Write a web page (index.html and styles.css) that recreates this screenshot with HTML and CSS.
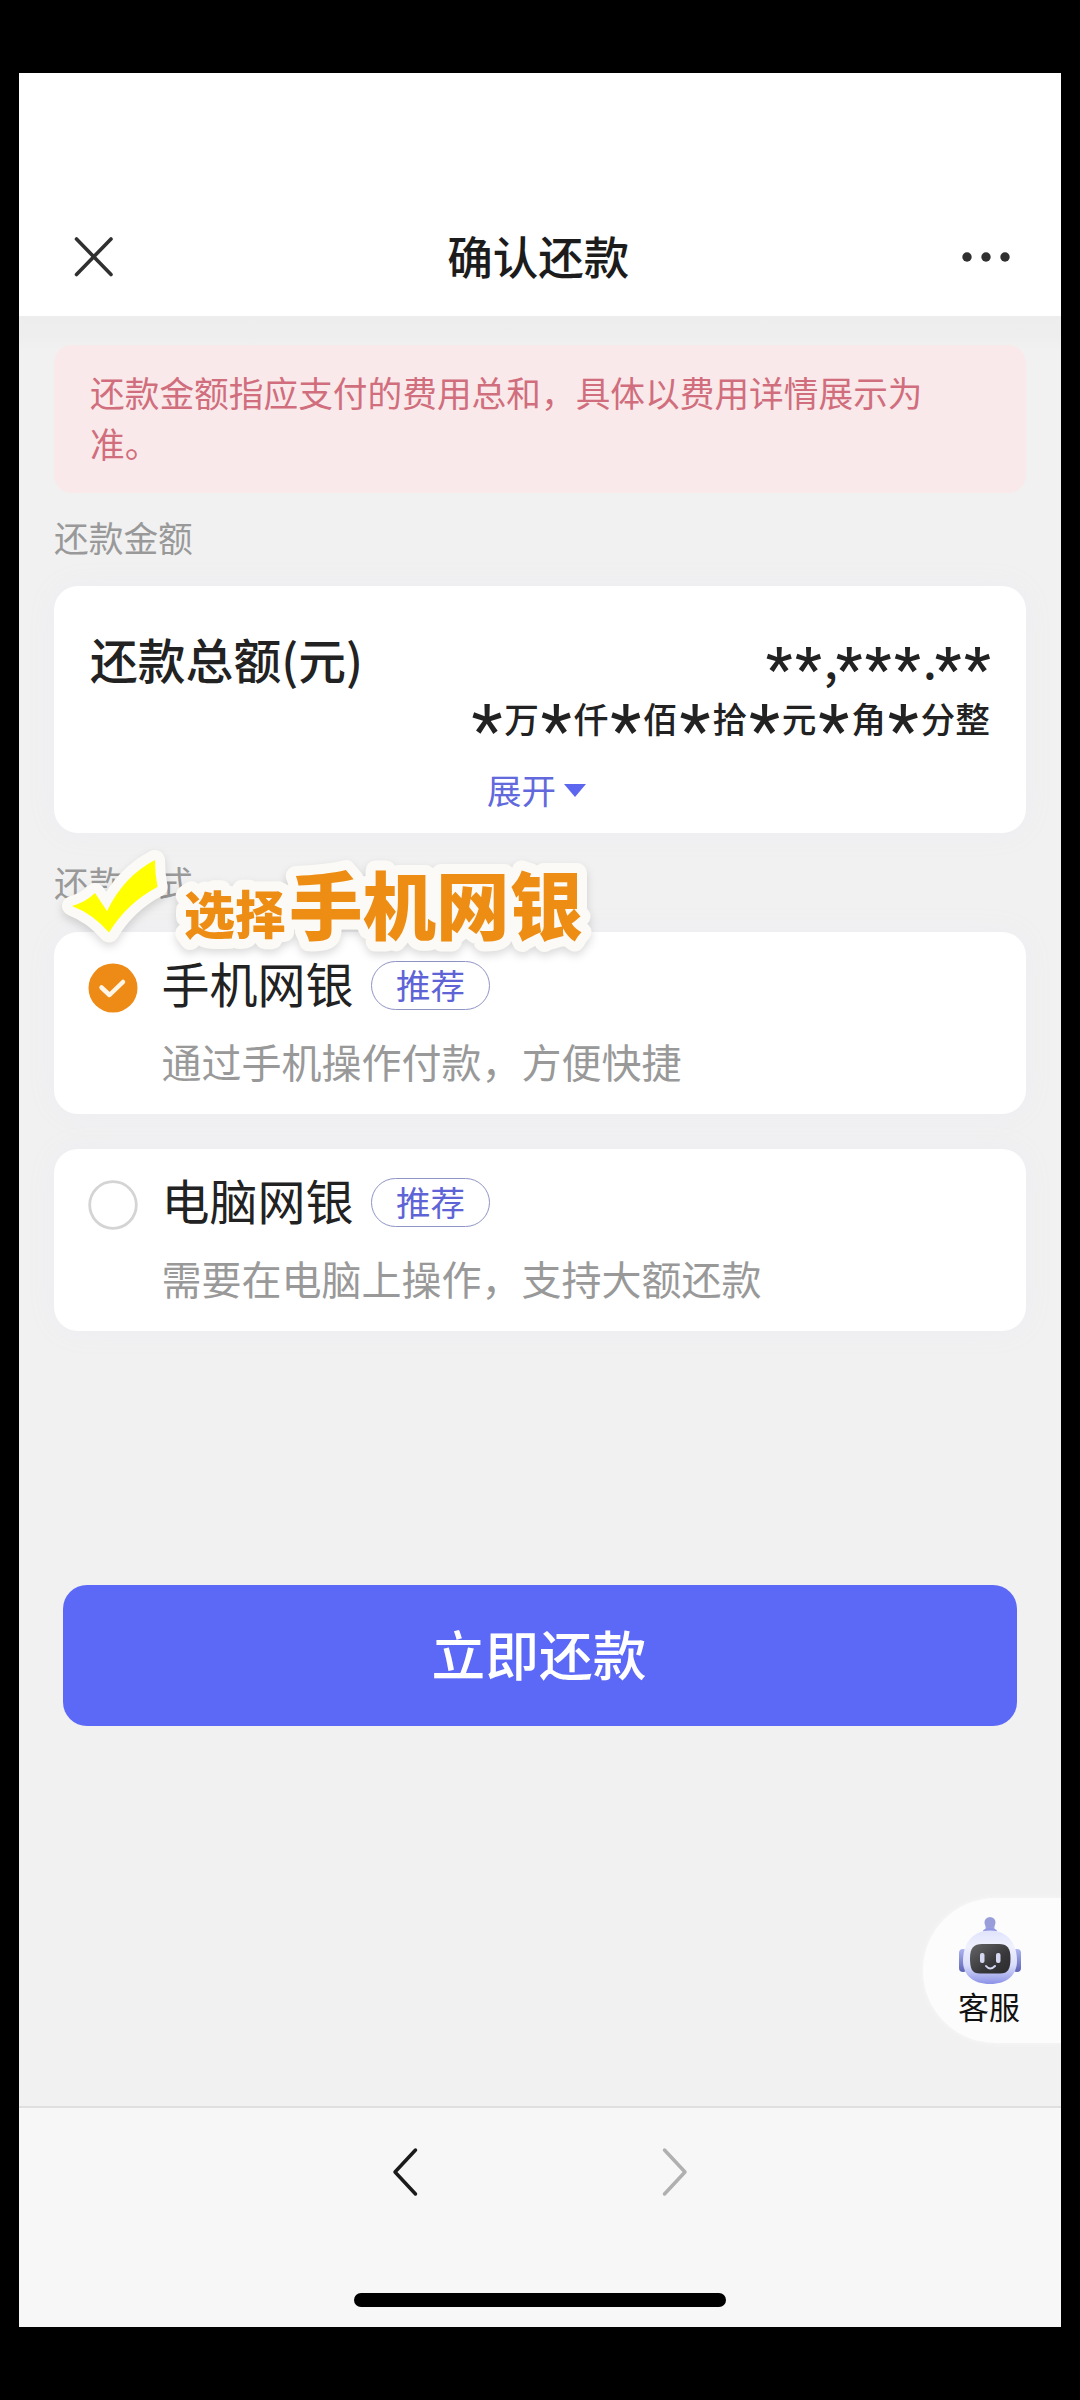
FILE: index.html
```html
<!DOCTYPE html>
<html lang="zh-CN">
<head>
<meta charset="utf-8">
<title>确认还款</title>
<link rel="stylesheet" href="styles.css">
</head>
<body>
<div class="screen">
  <header class="header">
    <svg class="close" viewBox="0 0 40 42"><path d="M2.500 3L37 38.500M37 3L2.500 38.500"/></svg>
    <h1 class="title">确认还款</h1>
    <svg class="more" viewBox="0 0 48 10"><circle cx="5" cy="5" r="4.700"/><circle cx="24" cy="5" r="4.700"/><circle cx="43" cy="5" r="4.700"/></svg>
  </header>
  <main class="content">
    <div class="notice">还款金额指应支付的费用总和，具体以费用详情展示为准。</div>
    <div class="label">还款金额</div>
    <section class="card total">
      <div class="total-row"><span class="total-name">还款总额(元)</span><span class="total-value"><b>**</b>,<b>***</b>.<b>**</b></span></div>
      <div class="total-words"><i>*</i>万<i>*</i>仟<i>*</i>佰<i>*</i>拾<i>*</i>元<i>*</i>角<i>*</i>分整</div>
      <div class="expand">展开<span class="caret"></span></div>
    </section>
    <div class="label label-method">还款方式
      <svg class="sticker" viewBox="54 833 560 130">
        <path d="M72 906Q86 902 95 893L107 911Q124 876 155 860Q155 874 157.500 887Q127 903 109 932.500Q93 914 72 906Z"/>
        <text y="934"><tspan class="sticker-small" x="184">选择</tspan><tspan x="289">手机网银</tspan></text>
      </svg>
    </div>
    <section class="card option">
      <svg class="radio" viewBox="0 0 50 50"><circle class="radio-on" cx="25" cy="25" r="24.500"/><path class="radio-tick" d="M13.500 24.500L21.500 32L35 19"/></svg>
      <div class="option-body">
        <div class="option-title">手机网银<span class="tag">推荐</span></div>
        <div class="option-desc">通过手机操作付款，方便快捷</div>
      </div>
    </section>
    <section class="card option">
      <svg class="radio" viewBox="0 0 50 50"><circle class="radio-off" cx="25" cy="25" r="23.300"/></svg>
      <div class="option-body">
        <div class="option-title">电脑网银<span class="tag">推荐</span></div>
        <div class="option-desc">需要在电脑上操作，支持大额还款</div>
      </div>
    </section>
    <button class="pay">立即还款</button>
    <div class="service">
      <svg class="robot" viewBox="0 0 66 70">
        <defs>
          <linearGradient id="head" x1="0" y1="0" x2="0" y2="1"><stop offset="0" stop-color="#e0e3fb"/><stop offset=".3" stop-color="#f0f1fe"/><stop offset=".65" stop-color="#dadefa"/><stop offset="1" stop-color="#8c92e6"/></linearGradient>
          <linearGradient id="ear" x1="0" y1="0" x2="0" y2="1"><stop offset="0" stop-color="#aeb4f1"/><stop offset="1" stop-color="#5d63b4"/></linearGradient>
          <linearGradient id="face" x1="0" y1="0" x2="1" y2="1"><stop offset="0" stop-color="#666668"/><stop offset=".6" stop-color="#38383a"/><stop offset="1" stop-color="#2c2c2e"/></linearGradient>
        </defs>
        <rect x="2" y="33" width="8" height="23" rx="4" fill="url(#ear)"/>
        <rect x="56" y="33" width="8" height="23" rx="4" fill="url(#ear)"/>
        <rect x="28.500" y="8" width="9" height="10" fill="#9fa5e3"/>
        <circle cx="33" cy="6.500" r="5.500" fill="#999edb"/>
        <ellipse cx="33" cy="15" rx="7" ry="3" fill="#9198df"/>
        <path d="M33 14.500C50 14.500 60 27 60 45C60 59 50 68 33 68S6 59 6 45C6 27 16 14.500 33 14.500Z" fill="url(#head)"/>
        <path d="M25 28H42C50 28 53.500 32 53.500 42C53.500 53 51 57.500 43 57.500H23C15 57.500 13 53 13 42C13 32 17 28 25 28Z" fill="url(#face)"/>
        <rect x="23" y="37" width="4.500" height="10" rx="2" fill="#d6d8f2"/>
        <rect x="39" y="37" width="4.500" height="10" rx="2" fill="#d6d8f2"/>
        <path d="M29 50Q33 55 38 50" fill="none" stroke="#d6d8f2" stroke-width="2" stroke-linecap="round"/>
      </svg>
      <span>客服</span>
    </div>
  </main>
  <footer class="footer">
    <nav class="nav">
      <svg class="chevron back" viewBox="0 0 28 50"><path d="M24.500 3L4 25L24.500 47"/></svg>
      <svg class="chevron forward" viewBox="0 0 28 50"><path d="M3.500 3L24 25L3.500 47"/></svg>
    </nav>
    <div class="home"></div>
  </footer>
</div>
</body>
</html>
```
FILE: styles.css
```css
* { box-sizing: border-box; }
body {
  margin: 0;
  height: 2400px;
  padding: 72.500px 19px 0 18.500px;
  background: #000;
  color: #222;
  font-family: "Noto Sans CJK SC", sans-serif;
  overflow: hidden;
}
.screen {
  display: flex;
  flex-direction: column;
  height: 2254.500px;
  background: #f0f0f1;
  overflow: hidden;
}
.header {
  flex: none;
  height: 243.500px;
  padding: 125px 50.500px 0 55.500px;
  display: flex;
  justify-content: space-between;
  align-items: flex-start;
  background: #fff;
}
.close { width: 40px; height: 42px; margin-top: 38px; }
.close path { fill: none; stroke: #303030; stroke-width: 3.600; stroke-linecap: round; }
.title {
  margin: 24px 0 0;
  font-size: 45.500px;
  line-height: 66px;
  font-weight: 500;
  color: #1c1c1c;
}
.more { width: 48px; height: 10px; margin-top: 54px; fill: #303030; }
.content {
  position: relative;
  flex: none;
  height: 1790px;
  padding: 29px 35.500px 0 35.500px;
  background: linear-gradient(#ededed 0, #eee 20px, #f1f1f1 34px);
}
.notice {
  height: 148px;
  padding: 22px 36px;
  border-radius: 18px;
  background: #fae9ea;
  color: #d06e7d;
  font-size: 34.700px;
  line-height: 51px;
}
.label {
  height: 93px;
  padding-top: 18px;
  font-size: 34.700px;
  line-height: 52px;
  color: #999;
}
.card { border-radius: 24px; background: #fff; box-shadow: 0 0 30px #ededf3; }
.total { height: 247px; padding: 40px 35.500px 0 36px; }
.total-row { display: flex; justify-content: space-between; height: 66px; line-height: 66px; font-weight: 500; }
.total-name { font-size: 47.800px; }
.total-value { font-size: 46px; letter-spacing: -2px; }
.total-value b {
  font-family: Roboto, sans-serif;
  font-size: 60px;
  font-weight: 500;
  letter-spacing: 2.500px;
  line-height: 0;
  vertical-align: -10px;
}
.total-value b:last-child { margin-right: -3px; }
.total-words { height: 52px; text-align: right; font-size: 34.700px; line-height: 52px; font-weight: 500; white-space: nowrap; }
.total-words i {
  display: inline-flex;
  justify-content: center;
  width: 34.700px;
  height: 0;
  font: 400 72px/0 Roboto, sans-serif;
  vertical-align: -23px;
}
.expand {
  display: flex;
  align-items: center;
  justify-content: center;
  gap: 8px;
  margin-top: 20px;
  padding-right: 7px;
  font-size: 34.500px;
  line-height: 50px;
  color: #6169dd;
}
.caret { margin-top: 3px; border: 11px solid transparent; border-top: 13px solid #5c66ef; border-bottom: 0; }
.label-method { position: relative; height: 99px; padding-top: 23px; z-index: 1; }
.sticker {
  position: absolute;
  left: 0;
  top: 0;
  width: 560px;
  height: 130px;
  overflow: visible;
  fill: #ed8d14;
  stroke: #fcfaf6;
  stroke-width: 20px;
  stroke-linejoin: round;
  font-size: 73.500px;
  font-weight: 900;
  filter: drop-shadow(0 4px 4px rgba(0, 0, 0, .14));
}
.sticker path, .sticker text { paint-order: stroke; }
.sticker path { fill: #ffff00; }
.sticker-small { font-size: 51px; }
.option { display: flex; height: 182px; padding: 0 35px 0 34px; margin-bottom: 35px; }
.radio { flex: none; width: 50px; height: 50px; margin-top: 31px; }
.radio-on { fill: #ee8b16; }
.radio-tick { fill: none; stroke: #fff6e8; stroke-width: 4.500; stroke-linecap: round; stroke-linejoin: round; }
.radio-off { fill: #fff; stroke: #d4d4d4; stroke-width: 2.800; }
.option-body { padding: 15px 0 0 23.500px; }
.option-title { display: flex; gap: 17.500px; height: 70px; font-size: 48px; line-height: 70px; }
.tag {
  width: 119px;
  height: 49px;
  margin-top: 13.500px;
  border: 1.500px solid #8f94c5;
  border-radius: 25px;
  text-align: center;
  font-size: 34.500px;
  line-height: 44px;
  color: #5e64d6;
}
.option-desc { margin-top: 14px; font-size: 40px; line-height: 60px; color: #999; }
.pay {
  display: block;
  width: 954px;
  height: 141px;
  margin: 253.500px 0 0 9px;
  padding: 0 2px 6px 0;
  border: 0;
  border-radius: 24px;
  background: #5c68f6;
  color: #fff;
  font-family: inherit;
  font-size: 53.700px;
  font-weight: 500;
}
.service {
  position: absolute;
  right: 0;
  top: 1582px;
  width: 138px;
  height: 145px;
  padding: 18px 0 0;
  border-radius: 73px 0 0 73px;
  background: #fcfcfc;
  box-shadow: 0 0 5px #f8f8f8;
  display: flex;
  flex-direction: column;
  align-items: center;
  color: #111;
  font-size: 31px;
  line-height: 40px;
}
.service span { padding-right: 6px; }
.robot { width: 66px; height: 70px; margin-right: 4px; }
.footer { flex: 1; border-top: 2px solid #dfdfdf; background: #f7f7f7; }
.nav { display: flex; justify-content: space-between; padding: 39px 372px 0; height: 185px; }
.chevron { width: 28px; height: 50px; }
.chevron path { fill: none; stroke-width: 3.500; stroke-linecap: round; stroke-linejoin: round; }
.back path { stroke: #1b1b1b; }
.forward path { stroke: #b0b0b0; }
.home { width: 372px; height: 14px; margin: 0 auto; border-radius: 7px; background: #000; }
```
